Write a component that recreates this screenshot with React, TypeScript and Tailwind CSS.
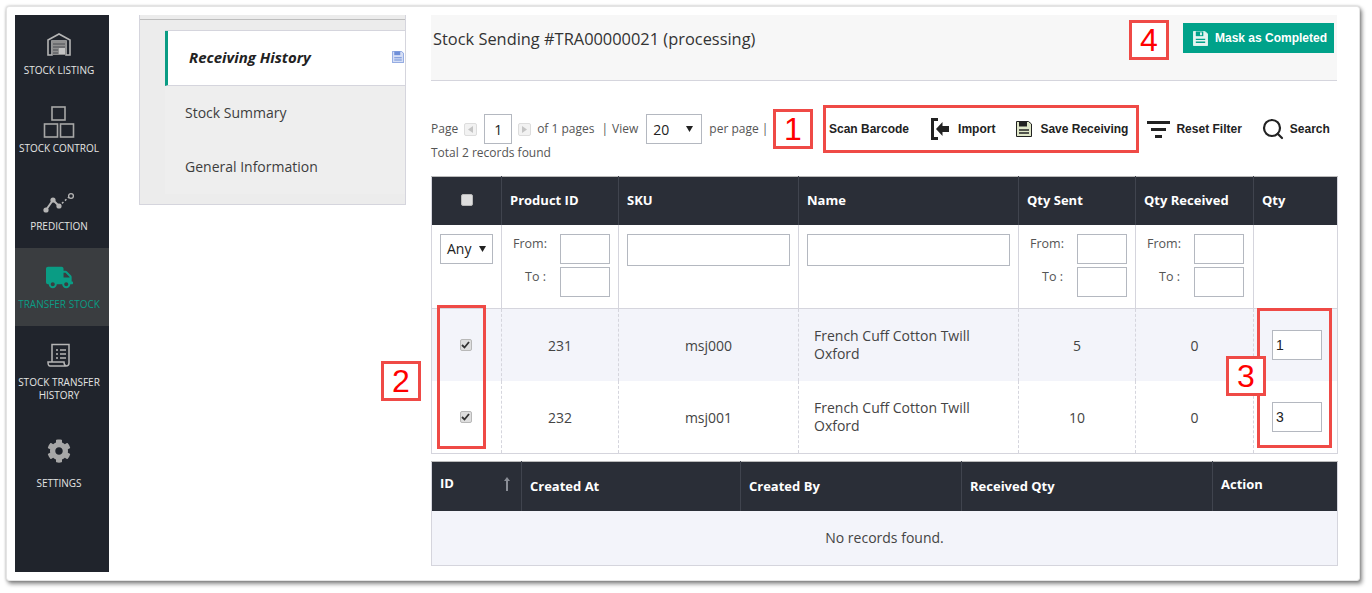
import React from 'react'
import { FaCog, FaTruck } from 'react-icons/fa'
import { Search } from 'lucide-react'

const openSans = "font-['Open_Sans',sans-serif]"
const arial = "font-['Liberation_Sans',Arial,sans-serif]"

const WarehouseIcon = () => (
  <svg width="24" height="24" viewBox="0 0 24 24" fill="none">
    <path d="M1 8 L12 2 L23 8 V23 H19 V9 H5 V23 H1 Z" fill="none" stroke="#b5b5b5" strokeWidth="1.6" />
    <rect x="5" y="9" width="14" height="14" fill="#8f8f8f" />
    <path d="M6 12h12M6 15h12M6 18h5M6 21h5" stroke="#4a4d52" strokeWidth="1" />
    <rect x="12" y="16" width="6" height="6" fill="#c4c4c4" />
  </svg>
)

const BoxesIcon = () => (
  <svg width="32" height="32" viewBox="0 0 32 32" fill="none" stroke="#a7a7a7" strokeWidth="1.6">
    <rect x="9" y="1" width="13" height="13" />
    <rect x="1.5" y="18" width="13" height="13" />
    <rect x="17.5" y="18" width="13" height="13" />
  </svg>
)

const PredictionIcon = () => (
  <svg width="32" height="22" viewBox="0 0 32 22" fill="none">
    <path d="M3 18 L10 8 L16 14" stroke="#b5b5b5" strokeWidth="2" />
    <path d="M16 14 L26 5" stroke="#b5b5b5" strokeWidth="1.5" strokeDasharray="2 2" />
    <circle cx="3" cy="18" r="2.6" fill="#b5b5b5" />
    <circle cx="10" cy="8" r="2.6" fill="#b5b5b5" />
    <circle cx="16" cy="14" r="2.6" fill="#b5b5b5" />
    <circle cx="28" cy="4" r="2.4" stroke="#b5b5b5" strokeWidth="1.3" />
  </svg>
)

const HistoryIcon = () => (
  <svg width="24" height="24" viewBox="0 0 24 24" fill="none" stroke="#b5b5b5" strokeWidth="1.5">
    <path d="M5 19 V1.5 H22 V20 C22 22 21 23 19 23 H3 C1.5 23 1 21.5 1 19 H17 C17 21 17.5 22.5 19 23" />
    <path d="M9 7h2M13 7h6M9 11h2M13 11h6M9 15h2M13 15h6" strokeWidth="1.7" />
  </svg>
)

const ImportIcon = () => (
  <svg width="18" height="22" viewBox="0 0 18 22">
    <path d="M7 1.5 H1.5 V20.5 H7" fill="none" stroke="#222" strokeWidth="3" />
    <path d="M5 11 L11.5 4 V8 H18 V14 H11.5 V18 Z" fill="#222" />
  </svg>
)

// floppy disk, colours change per use
const Floppy = ({ size, body, ink, top }: { size: number; body: string; ink: string; top: string }) => (
  <svg width={size} height={size} viewBox="0 0 16 16">
    <path d="M0.5 0.5 H12.5 L15.5 3 V15.5 H0.5 Z" fill={body} stroke={top} strokeWidth="1" />
    <path d="M3 0.5 H11 V5.5 H3 Z" fill={ink} />
    <rect x="7.5" y="1.5" width="2" height="3" fill={top} />
    <path d="M3 9 H13 M3 12 H13" stroke={ink} strokeWidth="1.4" />
  </svg>
)

const FilterIcon = () => (
  <svg width="23" height="17" viewBox="0 0 23 17" fill="#222">
    <rect x="0" y="0" width="23" height="3" />
    <rect x="4" y="7" width="15" height="3" />
    <rect x="8" y="14" width="7" height="3" />
  </svg>
)

const Caret = () => (
  <svg width="7" height="6" viewBox="0 0 7 6" className="shrink-0">
    <path d="M0 0 H7 L3.5 6 Z" fill="#222" />
  </svg>
)

const PagerArrow = ({ dir }: { dir: 'l' | 'r' }) => (
  <span className="flex h-[13px] w-[13px] items-center justify-center rounded-[2px] border border-[#ddd] bg-[#f2f2f2]">
    <svg width="5" height="7" viewBox="0 0 5 7">
      <path d={dir === 'l' ? 'M5 0 V7 L0 3.5 Z' : 'M0 0 V7 L5 3.5 Z'} fill="#c4c4c4" />
    </svg>
  </span>
)

const Check = ({ checked }: { checked?: boolean }) => (
  <span className="mx-auto flex h-[12px] w-[12px] items-center justify-center rounded-[2px] border border-[#b8b8b8] bg-[#dedede]">
    {checked && (
      <svg width="9" height="8" viewBox="0 0 9 8">
        <path d="M1 4 L3.5 6.5 L8 1" fill="none" stroke="#333" strokeWidth="1.8" />
      </svg>
    )}
  </span>
)

const Tag = ({ n, className }: { n: number; className: string }) => (
  <div className={`absolute flex h-[40px] w-[40px] items-center justify-center border-[3px] border-[#ef4a46] bg-white text-[32px] leading-none text-[#f00] ${arial} ${className}`}>
    {n}
  </div>
)

const RedBox = ({ className }: { className: string }) => (
  <div className={`pointer-events-none absolute border-[3px] border-[#ef4a46] ${className}`} />
)

const NavItem = ({ icon, label, active, cname }: any) => (
  <div className={`flex flex-col items-center pr-[6px] text-center text-[10px] leading-[13px] ${active ? 'bg-[#3a3d40] text-[#0a9c84]' : 'text-[#e4e4e4]'} ${cname}`}>
    {icon}
    <div className="w-full whitespace-nowrap">{label}</div>
  </div>
)

const Sidebar = () => (
  <div className={`h-[557px] w-[94px] shrink-0 bg-[#20242c] ${openSans}`}>
    <NavItem cname="h-[77px] pt-[17px]" label={<div className="mt-[8px]">STOCK LISTING</div>} icon={<WarehouseIcon />} />
    <NavItem cname="h-[78px] pt-[14px]" label={<div className="mt-[4px]">STOCK CONTROL</div>} icon={<BoxesIcon />} />
    <NavItem cname="h-[78px] pt-[22px]" label={<div className="mt-[6px]">PREDICTION</div>} icon={<PredictionIcon />} />
    <NavItem cname="h-[78px] pt-[16px]" active label={<div className="mt-[7px]">TRANSFER STOCK</div>} icon={<FaTruck size={27} className="text-[#0a9c84]" />} />
    <NavItem cname="h-[104px] pt-[17px]" label={<div className="mt-[9px]">STOCK TRANSFER<br />HISTORY</div>} icon={<HistoryIcon />} />
    <NavItem cname="pt-[9px]" label={<div className="mt-[14px]">SETTINGS</div>} icon={<FaCog size={24} className="text-[#a7a7a7]" />} />
  </div>
)

const TabsPanel = () => (
  <div className={`ml-[30px] h-[190px] w-[267px] shrink-0 border border-t-0 border-[#d5d5dd] bg-[#ececec] pt-[15px] ${openSans}`}>
    <div className="-mt-[11px] mb-[10px] h-[1px] bg-[#bdbdbd]" />
    <div className="ml-[25px] border-t border-[#d5d5dd]">
      <div className="flex h-[55px] items-center justify-between border-b border-l-[3px] border-b-[#d5d5dd] border-l-[#0a9c84] bg-white pb-[2px] pl-[21px] pr-[1px] text-[15px] font-bold italic text-[#222]">
        <span>Receiving History</span>
        <Floppy size={12} body="#d5def5" ink="#6f8fd8" top="#6f8fd8" />
      </div>
      <div className="h-[108px] bg-[#eeeeee] pl-[20px] text-[14px] text-[#3d3d3d]">
        <div className="flex h-[54px] items-center pb-[2px]">Stock Summary</div>
        <div className="flex h-[54px] items-center pb-[2px]">General Information</div>
      </div>
    </div>
  </div>
)

const TopBar = () => (
  <div className="flex h-[66px] items-start justify-between border-b border-[#d5d5dd] bg-[#f7f7f7] pl-[2px] pr-[3px]">
    <div className={`mt-[13px] text-[16.4px] font-medium leading-[22px] text-[#333] ${openSans}`}>Stock Sending #TRA00000021 (processing)</div>
    <button className={`mt-[8px] flex h-[30px] w-[151px] items-center gap-[7px] bg-[#00a28a] pl-[10px] text-[12px] font-bold text-white ${arial}`}>
      <Floppy size={15} body="#e4f4f0" ink="#00a28a" top="#e4f4f0" />
      Mask as Completed
    </button>
  </div>
)

const ToolBtn = ({ icon, label, cname }: any) => (
  <div className={`flex items-center text-[12px] font-bold text-[#222] ${arial} ${cname}`}>
    {icon}
    <span>{label}</span>
  </div>
)

const Toolbar = () => (
  <div className="mt-[33px] flex h-[62px] items-start">
    <div className={`w-[342px] shrink-0 text-[12px] text-[#555] ${openSans}`}>
      <div className="flex h-[30px] items-center">
        <span>Page</span>
        <span className="ml-[6px]"><PagerArrow dir="l" /></span>
        <input readOnly value="1" className="ml-[7px] h-[30px] w-[28px] border border-[#b4b8c0] bg-white text-center text-[14px] text-[#222]" />
        <span className="ml-[6px]"><PagerArrow dir="r" /></span>
        <span className="ml-[6px]">of 1 pages</span>
        <span className="ml-[7px]">|</span>
        <span className="ml-[4px]">View</span>
        <div className="ml-[8px] flex h-[30px] w-[56px] items-center justify-between border border-[#b4b8c0] bg-white pl-[6px] pr-[8px] text-[14px] text-[#222]">
          20 <Caret />
        </div>
        <span className="ml-[7px]">per page</span>
        <span className="ml-[3px]">|</span>
      </div>
      <div className="leading-[18px]">Total 2 records found</div>
    </div>
    <div className="ml-[56px] flex h-[30px] items-center">
      <ToolBtn label="Scan Barcode" />
      <ToolBtn cname="ml-[22px] gap-[9px]" icon={<ImportIcon />} label="Import" />
      <ToolBtn cname="ml-[21px] gap-[8px]" icon={<Floppy size={16} body="#dfe6c8" ink="#222" top="#222" />} label="Save Receiving" />
      <ToolBtn cname="ml-[19px] gap-[6px]" icon={<FilterIcon />} label="Reset Filter" />
      <ToolBtn cname="ml-[19px] gap-[5px]" icon={<Search size={24} strokeWidth={2.2} className="text-[#222]" />} label="Search" />
    </div>
  </div>
)

const inputCls = 'block border border-[#b4b8c0] bg-white'

const FromTo = () => (
  <div className="grid w-full grid-cols-[50px_50px] gap-y-[3px] text-[12.5px] text-[#555]">
    <div className="flex h-[30px] items-start pl-[3px] pt-[1px] leading-[18px]">From:</div>
    <input className={`${inputCls} h-[30px] w-[50px]`} />
    <div className="flex h-[30px] items-start pl-[15px] pt-[1px] leading-[18px]">To :</div>
    <input className={`${inputCls} h-[30px] w-[50px]`} />
  </div>
)

const hBase = 'border-r border-[#40444e] text-left text-[13px] font-bold text-white'
const hCell = `${hBase} pl-[8px]`
const fCell = 'border-r border-[#d5d5dd] px-[8px] pt-[9px] align-top'
const dCell = 'border-r border-dashed border-[#d5d5dd] text-center text-[14px] text-[#444]'

const rows = [
  { id: 231, sku: 'msj000', sent: 5, qty: '1', bg: 'bg-[#f3f4fa]' },
  { id: 232, sku: 'msj001', sent: 10, qty: '3', bg: 'bg-white' },
]

const StockTable = () => (
  <table className={`w-[906px] table-fixed border-collapse border-x border-b border-[#d5d5dd] ${openSans}`}>
    <colgroup>
      <col className="w-[70px]" />
      <col className="w-[117px]" />
      <col className="w-[180px]" />
      <col className="w-[220px]" />
      <col className="w-[117px]" />
      <col className="w-[118px]" />
      <col className="w-[84px]" />
    </colgroup>
    <thead>
      <tr className="h-[48px] border-t border-[#bbbbbb] bg-[#2a2e37]">
        <th className={hBase}><div className="pb-[2px]"><Check /></div></th>
        <th className={hCell}>Product ID</th>
        <th className={hCell}>SKU</th>
        <th className={hCell}>Name</th>
        <th className={hCell}>Qty Sent</th>
        <th className={hCell}>Qty Received</th>
        <th className={`${hCell} border-r-0`}>Qty</th>
      </tr>
      <tr className="h-[84px] border-b border-[#d5d5dd] bg-white">
        <th className={fCell}>
          <div className="flex h-[30px] w-[53px] items-center justify-between border border-[#b4b8c0] pl-[6px] pr-[6px] text-[14px] font-normal text-[#222]">
            Any <Caret />
          </div>
        </th>
        <th className={`${fCell} font-normal`}><FromTo /></th>
        <th className={fCell}><input className={`${inputCls} h-[32px] w-full`} /></th>
        <th className={fCell}><input className={`${inputCls} h-[32px] w-full`} /></th>
        <th className={`${fCell} font-normal`}><FromTo /></th>
        <th className={`${fCell} font-normal`}><FromTo /></th>
        <th className={`${fCell} border-r-0`} />
      </tr>
    </thead>
    <tbody>
      {rows.map((r) => (
        <tr key={r.id} className={`h-[72.5px] ${r.bg}`}>
          <td className={dCell}><div className="pr-[2px]"><Check checked /></div></td>
          <td className={dCell}>{r.id}</td>
          <td className={dCell}>{r.sku}</td>
          <td className={`${dCell} pl-[15px] pr-[15px] text-left leading-[18px]`}>French Cuff Cotton Twill Oxford</td>
          <td className={dCell}>{r.sent}</td>
          <td className={dCell}>0</td>
          <td className="pl-[18px]">
            <input readOnly value={r.qty} className={`${inputCls} h-[30px] w-[50px] pl-[3px] text-[14px] text-[#222] ${arial}`} />
          </td>
        </tr>
      ))}
    </tbody>
  </table>
)

const HistoryTable = () => (
  <table className={`mt-[7px] w-[906px] table-fixed border-collapse border-x border-b border-[#d5d5dd] ${openSans}`}>
    <colgroup>
      <col className="w-[90px]" />
      <col className="w-[219px]" />
      <col className="w-[221px]" />
      <col className="w-[251px]" />
      <col className="w-[125px]" />
    </colgroup>
    <thead>
      <tr className="h-[49px] border-t border-[#bbbbbb] bg-[#2a2e37]">
        <th className={hCell}>
          <div className="-mt-[5px] flex items-center justify-between pr-[11px]">
            <span>ID</span>
            <svg width="6" height="14" viewBox="0 0 6 14">
              <path d="M3 0 L6 4 H4 V14 H2 V4 H0 Z" fill="#8a8e96" />
            </svg>
          </div>
        </th>
        <th className={hCell}>Created At</th>
        <th className={hCell}>Created By</th>
        <th className={hCell}>Received Qty</th>
        <th className={`${hCell} border-r-0`}><div className="-mt-[4px]">Action</div></th>
      </tr>
    </thead>
    <tbody>
      <tr className="h-[55px] bg-[#f3f4fa]">
        <td colSpan={5} className="text-center text-[14px] text-[#444]">No records found.</td>
      </tr>
    </tbody>
  </table>
)

export default function App() {
  return (
    <div className="relative h-[593px] w-[1372px] overflow-hidden bg-white">
      <div className="absolute left-[6px] top-[6px] h-[575px] w-[1354px] rounded-[3px] border border-[#e4e4e4] bg-white shadow-[0_0_3px_rgba(0,0,0,0.25),2px_3px_4px_rgba(0,0,0,0.45)]" />
      <div className="relative flex pl-[15px] pt-[15px]">
        <Sidebar />
        <TabsPanel />
        <div className="ml-[25px] w-[906px] shrink-0">
          <TopBar />
          <Toolbar />
          <StockTable />
          <HistoryTable />
        </div>
      </div>
      <RedBox className="left-[823px] top-[105px] h-[48px] w-[316px]" />
      <RedBox className="left-[437px] top-[305px] h-[144px] w-[49px]" />
      <RedBox className="left-[1257px] top-[308px] h-[140px] w-[75px]" />
      <Tag n={1} className="left-[773px] top-[109px]" />
      <Tag n={2} className="left-[381px] top-[361px]" />
      <Tag n={3} className="left-[1226px] top-[356px]" />
      <Tag n={4} className="left-[1129px] top-[20px]" />
    </div>
  )
}
